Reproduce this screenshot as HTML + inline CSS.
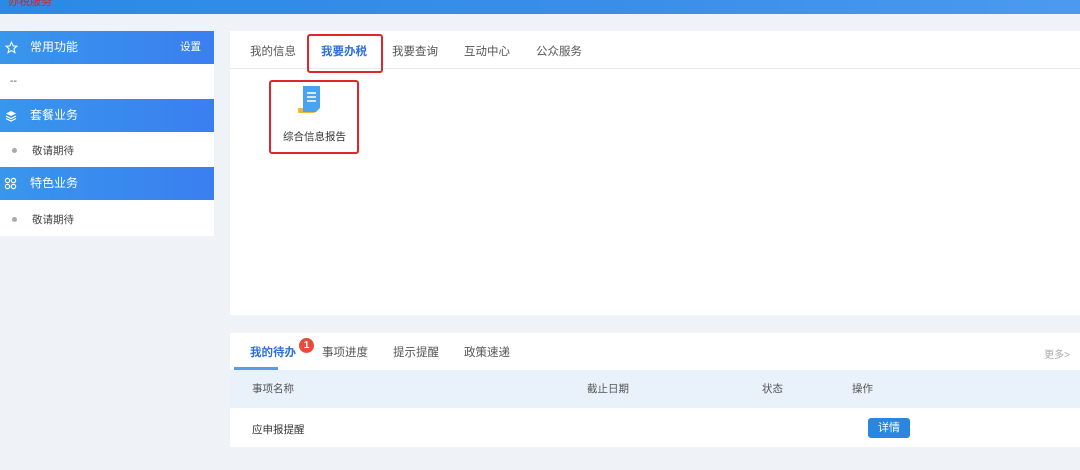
<!DOCTYPE html><html><head><meta charset="utf-8"><style>
*{margin:0;padding:0;box-sizing:border-box}
body{width:1080px;height:470px;overflow:hidden;background:#eff2f6;font-family:"Liberation Sans","Noto Sans CJK SC",sans-serif;position:relative;font-size:12px;color:#333}
.abs{position:absolute}
.top{left:0;top:0;width:1080px;height:14px;background:linear-gradient(90deg,#2a8ae6,#3a8fe8 60%,#4a9bf0);overflow:hidden}
.side{left:0;top:31px;width:214px;height:205px;background:#fff}
.hd{position:absolute;left:0;width:214px;height:33px;background:linear-gradient(90deg,#3896ec,#3a7ff0);color:#fff;font-size:12px;line-height:33px}
.hd span{position:absolute;left:30px}
.it{position:absolute;left:0;width:214px;color:#444;font-size:10.5px}
.dot{position:absolute;left:12px;width:5px;height:5px;border-radius:50%;background:#aaa}
.panel{left:230px;top:31px;width:850px;height:284px;background:#fff}
.tabs{position:absolute;left:0;top:0;width:850px;height:38px;border-bottom:1px solid #e6e9ee}
.tab{position:absolute;top:12px;font-size:11.5px;color:#555}
.red{position:absolute;border:2px solid #e0262a;border-radius:3px}
.p2{left:230px;top:333px;width:850px;height:114px;background:#fff}
</style></head><body>
<div class="abs top"><span style="position:absolute;left:8px;top:-7px;color:#d22;font-size:11px">办税服务</span></div>
<div class="abs side">
 <div class="hd" style="top:0"><svg style="position:absolute;left:5px;top:10px" width="13" height="13" viewBox="0 0 24 24"><path d="M12 2l3 7 7 .6-5.4 4.7 1.7 7.2L12 17.7 5.7 21.5l1.7-7.2L2 9.6 9 9z" fill="none" stroke="#fff" stroke-width="2"/></svg><span>常用功能</span><b style="position:absolute;right:13px;font-weight:normal;font-size:10.5px">设置</b></div>
 <div class="it" style="top:44px;left:10px">--</div>
 <div class="hd" style="top:68px"><svg style="position:absolute;left:5px;top:11px" width="12" height="12" viewBox="0 0 24 24"><path d="M12 2l10 5-10 5L2 7z" fill="#fff"/><path d="M2 12l10 5 10-5M2 17l10 5 10-5" fill="none" stroke="#fff" stroke-width="2.5"/></svg><span>套餐业务</span></div>
 <div class="it" style="top:112px"><i class="dot" style="top:5px"></i><span style="position:absolute;left:32px">敬请期待</span></div>
 <div class="hd" style="top:136px"><svg style="position:absolute;left:4px;top:10px" width="13" height="13" viewBox="0 0 24 24" fill="none" stroke="#fff" stroke-width="2.2"><circle cx="6.5" cy="6.5" r="4"/><circle cx="17.5" cy="6.5" r="4"/><circle cx="6.5" cy="17.5" r="4"/><circle cx="17.5" cy="17.5" r="4"/></svg><span>特色业务</span></div>
 <div class="it" style="top:181px"><i class="dot" style="top:5px"></i><span style="position:absolute;left:32px">敬请期待</span></div>
</div>
<div class="abs panel">
 <div class="tabs">
  <span class="tab" style="left:20px">我的信息</span>
  <span class="tab" style="left:91px;color:#2f6fd8;font-weight:bold">我要办税</span>
  <span class="tab" style="left:162px">我要查询</span>
  <span class="tab" style="left:234px">互动中心</span>
  <span class="tab" style="left:306px">公众服务</span>
 </div>
 <div class="red" style="left:77px;top:3px;width:76px;height:39px"></div>
 <div class="red" style="left:39px;top:49px;width:90px;height:74px"></div>
 <svg style="position:absolute;left:66px;top:53px" width="28" height="32" viewBox="0 0 28 32"><rect x="2" y="24" width="17" height="5" rx="1" fill="#f5b530"/><path d="M7 2h17v22l-4 4H7z" fill="#4aa3ee"/><path d="M11 9h9M11 13h9M11 17h9" stroke="#fff" stroke-width="1.6"/></svg>
 <span style="position:absolute;left:53px;top:98px;font-size:10.5px;color:#333">综合信息报告</span>
</div>
<div class="abs p2">
 <span class="tab" style="left:20px;top:11px;color:#2f6fd8;font-weight:bold">我的待办</span>
 <span style="position:absolute;left:69px;top:5px;width:15px;height:15px;border-radius:50%;background:#e84b3c;color:#fff;font-size:10px;text-align:center;line-height:15px;font-weight:bold">1</span>
 <span class="tab" style="left:92px;top:11px">事项进度</span>
 <span class="tab" style="left:163px;top:11px">提示提醒</span>
 <span class="tab" style="left:234px;top:11px">政策速递</span>
 <span style="position:absolute;right:10px;top:13px;font-size:10px;color:#aaa">更多&gt;</span>
 <div style="position:absolute;left:4px;top:34px;width:44px;height:3px;background:#5b9bea"></div>
 <div style="position:absolute;left:0;top:37px;width:850px;height:38px;background:#e9f2fb;font-size:10.5px;color:#555;line-height:38px">
  <span style="position:absolute;left:22px">事项名称</span><span style="position:absolute;left:357px">截止日期</span><span style="position:absolute;left:532px">状态</span><span style="position:absolute;left:622px">操作</span>
 </div>
 <span style="position:absolute;left:22px;top:89px;font-size:10.5px">应申报提醒</span>
 <span style="position:absolute;left:638px;top:85px;width:42px;height:20px;background:#2a86e0;color:#fff;border-radius:3px;font-size:11px;text-align:center;line-height:20px">详情</span>
</div>
</body></html>
